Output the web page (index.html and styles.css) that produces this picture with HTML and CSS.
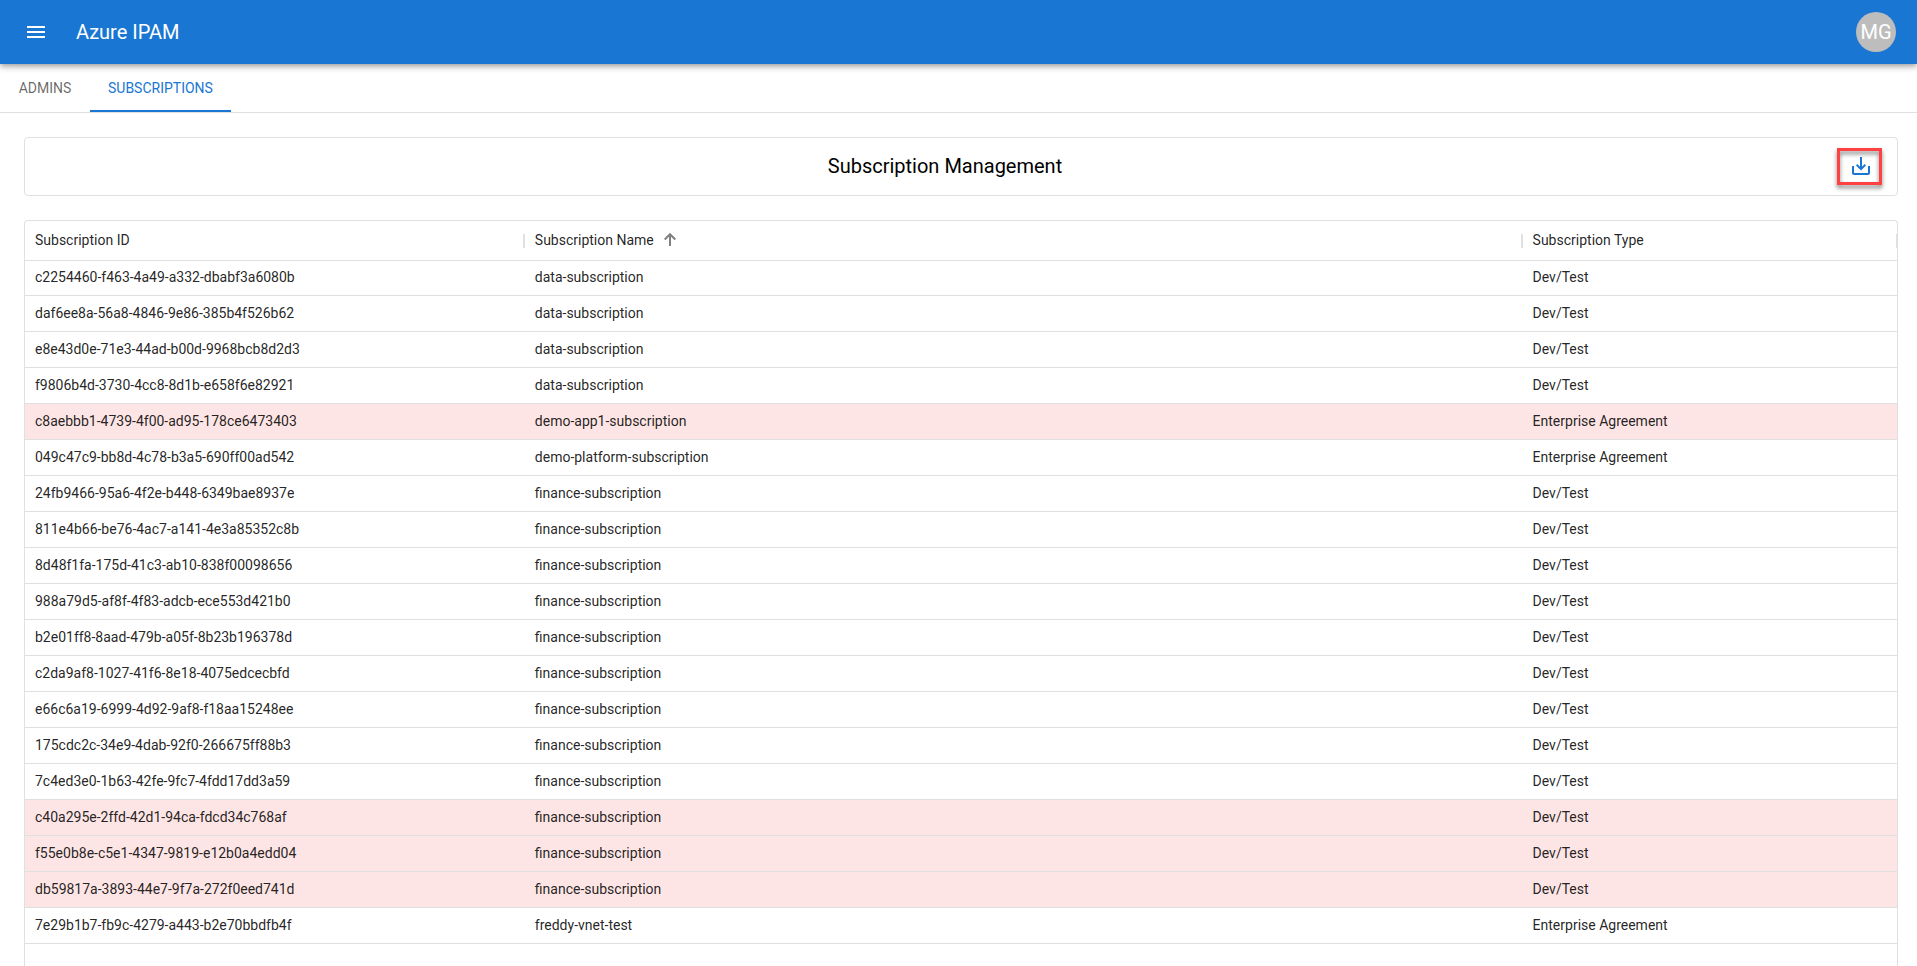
FILE: index.html
```html
<!DOCTYPE html>
<html lang="en">
<head>
<meta charset="utf-8">
<title>Azure IPAM</title>
<link rel="stylesheet" href="styles.css">
</head>
<body>
<header class="app-bar">
  <button class="menu-button" type="button" aria-label="Open menu">
    <svg class="icon" viewBox="0 0 24 24" aria-hidden="true"><path d="M3 18h18v-2H3v2zm0-5h18v-2H3v2zm0-7v2h18V6H3z"/></svg>
  </button>
  <h1 class="app-title">Azure IPAM</h1>
  <button class="avatar" type="button">MG</button>
</header>
<nav class="tabs">
  <a class="tab" href="#admins">ADMINS</a>
  <a class="tab tab-active" href="#subscriptions" aria-current="page">SUBSCRIPTIONS</a>
</nav>
<main class="content">
  <section class="toolbar">
    <h2 class="toolbar-title">Subscription Management</h2>
    <button class="save-button" type="button" aria-label="Save">
      <svg class="icon" viewBox="0 0 24 24" aria-hidden="true"><path d="M19 12v7H5v-7H3v7c0 1.1.9 2 2 2h14c1.1 0 2-.9 2-2v-7h-2zm-6 .67l2.59-2.58L17 11.5l-5 5-5-5 1.41-1.41L11 12.67V3h2v9.67z"/></svg>
      <span class="highlight"></span>
    </button>
  </section>
  <section class="grid">
    <table class="grid-table">
      <colgroup><col class="col-id"><col class="col-name"><col class="col-type"></colgroup>
      <thead>
        <tr>
          <th scope="col">Subscription ID</th>
          <th scope="col" aria-sort="ascending"><span class="sorted">Subscription Name
            <svg class="sort-icon" viewBox="0 0 12 13" aria-hidden="true"><path d="M6 13V1.500M.7 6.500L6 1.200l5.300 5.300"/></svg></span></th>
          <th scope="col">Subscription Type</th>
        </tr>
      </thead>
      <tbody>
        <tr><td>c2254460-f463-4a49-a332-dbabf3a6080b</td><td>data-subscription</td><td>Dev/Test</td></tr>
        <tr><td>daf6ee8a-56a8-4846-9e86-385b4f526b62</td><td>data-subscription</td><td>Dev/Test</td></tr>
        <tr><td>e8e43d0e-71e3-44ad-b00d-9968bcb8d2d3</td><td>data-subscription</td><td>Dev/Test</td></tr>
        <tr><td>f9806b4d-3730-4cc8-8d1b-e658f6e82921</td><td>data-subscription</td><td>Dev/Test</td></tr>
        <tr class="excluded"><td>c8aebbb1-4739-4f00-ad95-178ce6473403</td><td>demo-app1-subscription</td><td>Enterprise Agreement</td></tr>
        <tr><td>049c47c9-bb8d-4c78-b3a5-690ff00ad542</td><td>demo-platform-subscription</td><td>Enterprise Agreement</td></tr>
        <tr><td>24fb9466-95a6-4f2e-b448-6349bae8937e</td><td>finance-subscription</td><td>Dev/Test</td></tr>
        <tr><td>811e4b66-be76-4ac7-a141-4e3a85352c8b</td><td>finance-subscription</td><td>Dev/Test</td></tr>
        <tr><td>8d48f1fa-175d-41c3-ab10-838f00098656</td><td>finance-subscription</td><td>Dev/Test</td></tr>
        <tr><td>988a79d5-af8f-4f83-adcb-ece553d421b0</td><td>finance-subscription</td><td>Dev/Test</td></tr>
        <tr><td>b2e01ff8-8aad-479b-a05f-8b23b196378d</td><td>finance-subscription</td><td>Dev/Test</td></tr>
        <tr><td>c2da9af8-1027-41f6-8e18-4075edcecbfd</td><td>finance-subscription</td><td>Dev/Test</td></tr>
        <tr><td>e66c6a19-6999-4d92-9af8-f18aa15248ee</td><td>finance-subscription</td><td>Dev/Test</td></tr>
        <tr><td>175cdc2c-34e9-4dab-92f0-266675ff88b3</td><td>finance-subscription</td><td>Dev/Test</td></tr>
        <tr><td>7c4ed3e0-1b63-42fe-9fc7-4fdd17dd3a59</td><td>finance-subscription</td><td>Dev/Test</td></tr>
        <tr class="excluded"><td>c40a295e-2ffd-42d1-94ca-fdcd34c768af</td><td>finance-subscription</td><td>Dev/Test</td></tr>
        <tr class="excluded"><td>f55e0b8e-c5e1-4347-9819-e12b0a4edd04</td><td>finance-subscription</td><td>Dev/Test</td></tr>
        <tr class="excluded"><td>db59817a-3893-44e7-9f7a-272f0eed741d</td><td>finance-subscription</td><td>Dev/Test</td></tr>
        <tr><td>7e29b1b7-fb9c-4279-a443-b2e70bbdfb4f</td><td>freddy-vnet-test</td><td>Enterprise Agreement</td></tr>
      </tbody>
    </table>
  </section>
</main>
</body>
</html>
```
FILE: styles.css
```css
* {
  box-sizing: border-box;
}

body {
  margin: 0;
  height: 100vh;
  display: flex;
  flex-direction: column;
  overflow: hidden;
  background: #fff;
  color: rgba(0, 0, 0, 0.87);
  font-family: Roboto, "Liberation Sans", sans-serif;
  font-size: 14px;
  line-height: 20px;
}

button {
  border: 0;
  padding: 0;
  background: none;
  font: inherit;
  color: inherit;
  cursor: pointer;
}

.icon {
  display: block;
  width: 24px;
  height: 24px;
  fill: currentColor;
}

.app-bar {
  flex: none;
  position: relative;
  display: flex;
  align-items: center;
  height: 64px;
  padding: 0 21px 0 12px;
  background: #1976d2;
  color: #fff;
  box-shadow: 0 2px 4px -1px rgba(0, 0, 0, 0.2), 0 4px 5px rgba(0, 0, 0, 0.14), 0 1px 10px rgba(0, 0, 0, 0.12);
}

.menu-button {
  padding: 12px;
}

.app-title {
  flex: 1;
  margin: 0 0 0 16px;
  font-size: 20px;
  font-weight: 400;
  line-height: 32px;
}

.avatar {
  width: 40px;
  height: 40px;
  border-radius: 50%;
  background: #bdbdbd;
  font-size: 20px;
}

.tabs {
  flex: none;
  display: flex;
  height: 49px;
  border-bottom: 1px solid #e0e0e0;
}

.tab {
  display: flex;
  align-items: center;
  justify-content: center;
  min-width: 90px;
  padding: 2px 18px 0;
  border-bottom: 2px solid transparent;
  color: rgba(0, 0, 0, 0.6);
  text-decoration: none;
}

.tab-active {
  border-bottom-color: #1976d2;
  color: #1976d2;
}

.content {
  flex: 1;
  min-height: 0;
  display: flex;
  flex-direction: column;
  gap: 24px;
  padding: 24px 19px 0 24px;
}

.toolbar {
  flex: none;
  display: flex;
  align-items: center;
  padding: 8px 16px 9px 24px;
  border: 1px solid #e0e0e0;
  border-radius: 4px;
}

.toolbar-title {
  flex: 1;
  margin: 0;
  color: #000;
  font-size: 20px;
  font-weight: 400;
  line-height: 32px;
  text-align: center;
}

.save-button {
  position: relative;
  padding: 8px;
  color: #1976d2;
}

.highlight {
  position: absolute;
  inset: 2px -1px 1px -4px;
  border: 3px solid #ff4141;
  filter: drop-shadow(0 3px 2px rgba(0, 0, 0, 0.5));
}

.grid {
  flex: 1;
  min-height: 0;
  overflow: hidden;
  border: 1px solid #e0e0e0;
  border-bottom: 0;
  border-radius: 4px 4px 0 0;
}

.grid-table {
  width: 100%;
  table-layout: fixed;
  border-collapse: separate;
  border-spacing: 0;
}

.col-id {
  width: 26.7%;
}

.col-name {
  width: 53.3%;
}

.col-type {
  width: 20%;
}

.grid-table th,
.grid-table td {
  height: 36px;
  padding: 0 10px 2px;
  border-bottom: 1px solid #e0e0e0;
  font-weight: 400;
  text-align: left;
  white-space: nowrap;
}

.grid-table th {
  position: relative;
  height: 40px;
}

.grid-table th::after {
  content: "";
  position: absolute;
  top: 13px;
  right: 0;
  width: 2px;
  height: 14px;
  background: #e0e0e0;
}

.grid-table th:last-child::after {
  right: -1px;
}

.grid-table tbody tr:first-child td {
  height: 35px;
}

.excluded {
  background: #fde5e5;
}

.sorted {
  display: flex;
  align-items: center;
  gap: 10px;
}

.sort-icon {
  width: 12px;
  height: 13px;
  fill: none;
  stroke: #808080;
  stroke-width: 2;
}
```
